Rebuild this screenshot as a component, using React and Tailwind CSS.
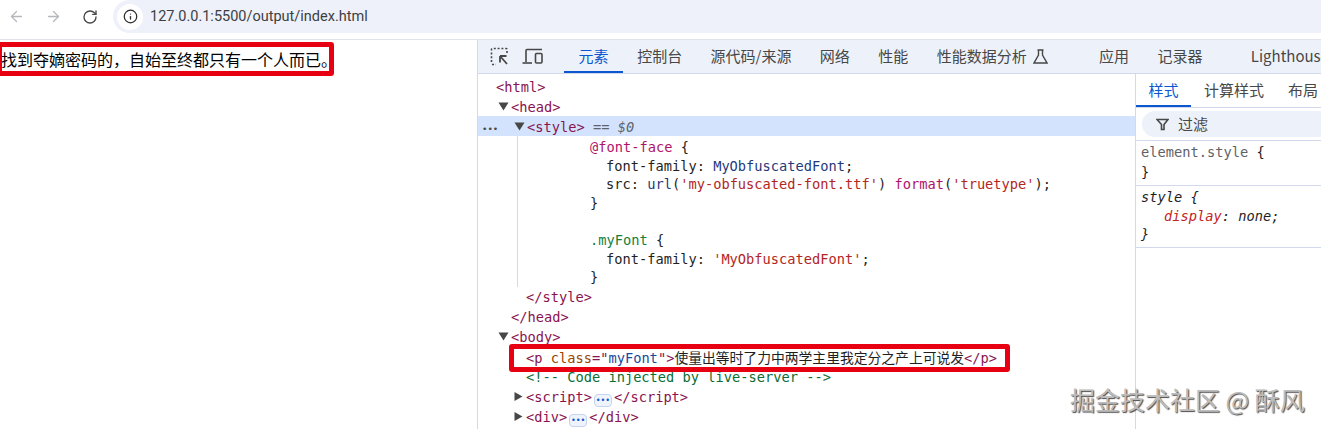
import { ArrowLeft, ArrowRight, RotateCw, Info } from 'lucide-react';

const Tag = ({ children }) => <span className="text-[#881350]">{children}</span>;

function Triangle({ down }) {
  return (
    <svg width="11" height="9" viewBox="0 0 11 9" className="inline-block mr-[2px] align-[1px]">
      {down ? <polygon points="0.5,0.5 10.5,0.5 5.5,8.5" fill="#474747" /> : <polygon points="1.5,0 9.5,4.5 1.5,9" fill="#474747" />}
    </svg>
  );
}

function Row({ className = '', children }) {
  return <div className={`h-5 leading-5 whitespace-pre ${className}`}>{children}</div>;
}

// lines of the <style> text node sit a bit tighter than the tree rows
function TextLine({ className = '', children }) {
  return <div className={`h-[18.6px] leading-[18.6px] whitespace-pre ${className}`}>{children}</div>;
}

const Dots = () => (
  <span className="inline-flex items-center justify-center w-[18px] h-[13px] mx-[2px] align-[-1px] rounded-[4px] border border-[#c4d4ee] bg-[#eef3fc] text-[#0b57d0] text-[8px] leading-none">
    •••
  </span>
);

function Tab({ children, active, className = '' }) {
  return (
    <div className={`relative h-full flex items-center px-[14.2px] shrink-0 ${active ? 'text-[#0b57d0]' : 'text-[#474747]'} ${className}`}>
      {children}
      {active && <div className="absolute left-0 right-0 bottom-0 h-[2px] bg-[#0b57d0]" />}
    </div>
  );
}

export default function App() {
  return (
    <div className="relative w-[1321px] h-[429px] overflow-hidden bg-white text-black font-['Inter','Noto_Sans_CJK_SC',sans-serif]">
      {/* Browser bar */}
      <div className="h-10 flex items-start border-b border-[#e1e3e8]">
        <div className="w-[113px] h-[33px] flex items-center shrink-0 pl-[8px] gap-[20px]">
          <ArrowLeft size={17} strokeWidth={1.8} className="text-[#b4b7bb]" />
          <ArrowRight size={17} strokeWidth={1.8} className="text-[#b4b7bb]" />
          <RotateCw size={16} strokeWidth={2} className="text-[#474747]" />
        </div>
        <div className="flex-1 h-[33px] flex items-center bg-[#eef1f9] rounded-l-[17px]">
          <div className="w-[26px] h-[26px] ml-[4px] rounded-full bg-white flex items-center justify-center">
            <Info size={15} strokeWidth={2} className="text-[#2b2b2b]" />
          </div>
          <span className="ml-[7px] text-[14.5px] text-[#3c4043] font-['Roboto','Inter',sans-serif]">127.0.0.1:5500/output/index.html</span>
        </div>
      </div>

      <div className="flex h-[389px]">
        {/* Page */}
        <div className="w-[477px] shrink-0 pl-[1px] pt-[8px] text-[16px] leading-[22px] text-black font-['Noto_Sans_CJK_SC',sans-serif]">
          找到夺嫡密码的，自始至终都只有一个人而已。
        </div>

        {/* DevTools */}
        <div className="flex-1 flex flex-col border-l border-[#d3d9ec] min-w-0">
          <div className="h-[34px] flex items-center bg-[#edf2fa] border-b border-[#d3d9ec] text-[15px] shrink-0 whitespace-nowrap overflow-hidden font-['Noto_Sans_CJK_SC',sans-serif]">
            <div className="w-[86px] h-full flex items-center shrink-0 pl-[12px] gap-[13px]">
              <svg width="19" height="19" viewBox="0 0 19 19" fill="none" stroke="#474747" className="shrink-0">
                <path d="M1.5 15V2.5A1 1 0 0 1 2.5 1.5H16A1 1 0 0 1 17 2.5V7" strokeWidth="1.6" strokeDasharray="2 1.8" />
                <path d="M2 17.5H6" strokeWidth="1.6" strokeDasharray="2 1.8" />
                <path d="M10 9H16.5M10 9V15.5M10 9L17 17" strokeWidth="1.8" />
              </svg>
              <svg width="21" height="17" viewBox="0 0 21 17" fill="none" stroke="#474747" strokeWidth="1.6" className="shrink-0">
                <path d="M4 14V2.5A1 1 0 0 1 5 1.5H20" />
                <path d="M0.5 15H10" />
                <rect x="13.5" y="5.5" width="6.5" height="9.5" rx="1" />
              </svg>
            </div>
            <Tab active className="w-[59px] justify-center">元素</Tab>
            <Tab>控制台</Tab>
            <Tab>源代码/来源</Tab>
            <Tab>网络</Tab>
            <Tab>性能</Tab>
            <Tab>
              性能数据分析
              <svg width="15" height="15" viewBox="0 0 15 15" fill="none" stroke="#474747" strokeWidth="1.4" className="ml-[6px]">
                <path d="M4.5 1H10.5M5.5 1V6L1 14H14L9.5 6V1" />
              </svg>
            </Tab>
            <Tab className="ml-[23px]">应用</Tab>
            <Tab>记录器</Tab>
            <Tab className="ml-[20px]">Lighthouse</Tab>
          </div>

          <div className="flex-1 flex min-h-0">
            {/* Elements tree */}
            <div className="w-[657px] shrink-0 pt-[2px] text-[13.7px] font-['DejaVu_Sans_Mono','Noto_Sans_CJK_SC',monospace] text-[#1f1f1f] overflow-hidden">
              <Row className="pl-[18px] leading-[22px]"><Tag>{'<html>'}</Tag></Row>
              <Row className="pl-[20px] leading-[22px]"><Triangle down /><Tag>{'<head>'}</Tag></Row>
              <Row className="pl-[4px] leading-[22px] bg-[#d3e3fd]">
                <span className="inline-block w-[32px] text-[9px] text-[#474747]">•••</span>
                <Triangle down />
                <Tag>{'<style>'}</Tag>
                <span className="text-[#5f6368]"> == <i>$0</i></span>
              </Row>
              <div className="ml-[39px] pt-[2px] border-l border-[#d3d9ec]">
                <TextLine className="pl-[72px]"><span className="text-[#b0136b]">@font-face</span> {'{'}</TextLine>
                <TextLine className="pl-[88px]">font-family: <span className="text-[#1f3a7a]">MyObfuscatedFont</span>;</TextLine>
                <TextLine className="pl-[88px]">
                  src: <span className="text-[#1f3a7a]">url</span>(<span className="text-[#b3261e]">'my-obfuscated-font.ttf'</span>) <span className="text-[#b0136b]">format</span>(<span className="text-[#b3261e]">'truetype'</span>);
                </TextLine>
                <TextLine className="pl-[72px]">{'}'}</TextLine>
                <TextLine />
                <TextLine className="pl-[72px]"><span className="text-[#15803d]">.myFont</span> {'{'}</TextLine>
                <TextLine className="pl-[88px]">font-family: <span className="text-[#b3261e]">'MyObfuscatedFont'</span>;</TextLine>
                <TextLine className="pl-[72px]">{'}'}</TextLine>
              </div>
              <Row className="pl-[48px]"><Tag>{'</style>'}</Tag></Row>
              <Row className="pl-[33px]"><Tag>{'</head>'}</Tag></Row>
              <Row className="pl-[20px]"><Triangle down /><Tag>{'<body>'}</Tag></Row>
              <Row className="pl-[48px]">
                <Tag>{'<p '}</Tag><span className="text-[#994500]">class</span><Tag>="</Tag><span className="text-[#1a4a9a]">myFont</span><Tag>"{'>'}</Tag>
                <span className="text-[13.8px] font-['Noto_Sans_CJK_SC',sans-serif]">使量出等时了力中两学主里我定分之产上可说发</span>
                <Tag>{'</p>'}</Tag>
              </Row>
              <Row className="pl-[48px]"><span className="text-[#0b6e33]">{'<!-- Code injected by live-server -->'}</span></Row>
              <Row className="pl-[35px]"><Triangle /><Tag>{'<script>'}</Tag><Dots /><Tag>{'</script>'}</Tag></Row>
              <Row className="pl-[35px]"><Triangle /><Tag>{'<div>'}</Tag><Dots /><Tag>{'</div>'}</Tag></Row>
            </div>

            {/* Styles sidebar */}
            <div className="flex-1 min-w-0 border-l border-[#d3d9ec] overflow-hidden">
              <div className="h-[34px] flex items-stretch border-b border-[#d3d9ec] text-[15px] bg-[#ffffff] font-['Noto_Sans_CJK_SC',sans-serif] whitespace-nowrap">
                <Tab active className="w-[55px] justify-center !px-0">样式</Tab>
                <Tab className="!px-0 ml-[13px]">计算样式</Tab>
                <Tab className="!px-0 ml-[24px]">布局</Tab>
              </div>
              <div className="h-[33px] flex items-center border-b border-[#d3d9ec] pl-[6px]">
                <div className="flex-1 h-[26px] flex items-center bg-[#edf2fa] rounded-l-[13px] pl-[14px] text-[15px] text-[#474747] font-['Noto_Sans_CJK_SC',sans-serif]">
                  <svg width="13" height="13" viewBox="0 0 13 13" fill="none" stroke="#474747" strokeWidth="1.6" className="mr-[9px]">
                    <path d="M1 1.5H12L8 6.5V11.5H5.5V6.5Z" />
                  </svg>
                  过滤
                </div>
              </div>
              <div className="text-[13.7px] font-['DejaVu_Sans_Mono',monospace] text-[#1f1f1f] pl-[5px] pt-[1px] pb-[3px] border-b border-[#d3d9ec]">
                <Row><span className="text-[#5f6368]">element.style</span> {'{'}</Row>
                <Row>{'}'}</Row>
              </div>
              <div className="text-[13.7px] italic font-['DejaVu_Sans_Mono',monospace] text-[#1f1f1f] pl-[5px] pt-[2px] pb-[3px] border-b border-[#d3d9ec]">
                <TextLine>style {'{'}</TextLine>
                <TextLine className="pl-[23px]"><span className="text-[#c5221f]">display</span>: none;</TextLine>
                <TextLine>{'}'}</TextLine>
              </div>
            </div>
          </div>
        </div>
      </div>

      {/* Annotation boxes over the screenshot */}
      <div className="absolute left-[-3px] top-[42px] w-[337px] h-[34px] border-[5px] border-[#e60012] rounded-[3px]" />
      <div className="absolute left-[509px] top-[344px] w-[501px] h-[28px] border-[5px] border-[#e60012] rounded-[3px]" />

      {/* Watermark */}
      <div className="absolute left-[1070px] top-[382px] text-[25px] leading-[34px] whitespace-nowrap text-[#bcbcbc] [text-shadow:1px_1px_1px_#4a4a4a] font-['Noto_Sans_CJK_SC',sans-serif]">
        掘金技术社区 @ 酥风
      </div>
    </div>
  );
}
